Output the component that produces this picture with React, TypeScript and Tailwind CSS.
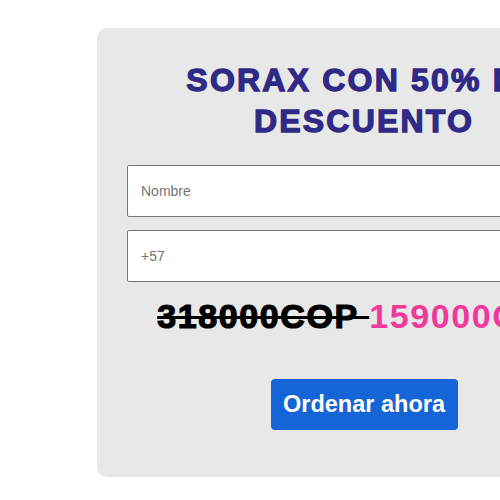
export default function App() {
  return (
    <div className="w-[500px] h-[500px] overflow-hidden bg-white" style={{ fontFamily: '"Liberation Sans", Arial, sans-serif' }}>
      <div className="ml-[97px] mt-[28px] w-[534px] rounded-[10px] bg-[#e8e8e8] px-[30px] pt-[32px] pb-[47px]">
        <h1 className="text-center text-[32px] leading-[41px] font-bold tracking-[2.2px] text-[#2e2a86] [-webkit-text-stroke:1.3px_#2e2a86]">
          SORAX CON 50% DE DESCUENTO
        </h1>
        <form className="mt-[23px] flex flex-col gap-[13px]">
          <input
            className="h-[52px] w-full rounded-[2px] border border-[#767676] bg-white px-[13px] text-[14px] text-black placeholder:text-[#757575] outline-none"
            placeholder="Nombre"
            type="text"
          />
          <input
            className="h-[52px] w-full rounded-[2px] border border-[#767676] bg-white px-[13px] text-[14px] text-black placeholder:text-[#757575] outline-none"
            placeholder="+57"
            type="text"
          />
        </form>
        <p className="mt-[13px] text-center text-[34px] leading-[42px] font-bold tracking-[1.6px] whitespace-nowrap">
          <span className="text-black line-through decoration-[3px] [-webkit-text-stroke:1.2px_#000]">318000COP </span>
          <span className="text-[#f0399b]">159000COP</span>
        </p>
        <div className="mt-[42px] flex justify-center">
          <button className="h-[51px] w-[187px] rounded-[4px] bg-[#1565d8] text-[23.5px] font-bold text-white">
            Ordenar ahora
          </button>
        </div>
      </div>
    </div>
  );
}
